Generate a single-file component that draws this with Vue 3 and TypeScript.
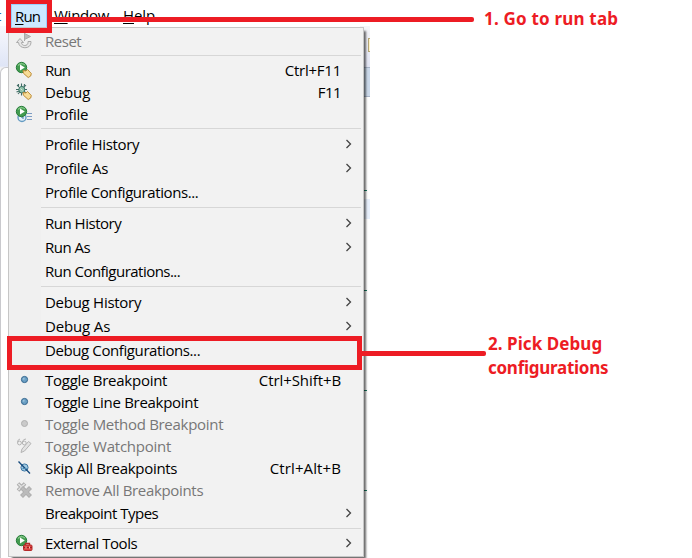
<script setup lang="ts">
import { onMounted, ref } from 'vue'

interface Item {
  label?: string
  width?: number
  icon?: string
  keys?: string
  keysWidth?: number
  sub?: boolean
  off?: boolean
  tall?: boolean
}

const sep: Item = {}
const items: Item[] = [
  { label: 'Reset', width: 36, icon: 'reset', off: true },
  sep,
  { label: 'Run', width: 25, icon: 'run', keys: 'Ctrl+F11', keysWidth: 56 },
  { label: 'Debug', width: 45, icon: 'debug', keys: 'F11', keysWidth: 23 },
  { label: 'Profile', width: 43, icon: 'profile' },
  sep,
  { label: 'Profile History', width: 94, sub: true, tall: true },
  { label: 'Profile As', width: 63, sub: true, tall: true },
  { label: 'Profile Configurations...', width: 153, tall: true },
  sep,
  { label: 'Run History', width: 76, sub: true, tall: true },
  { label: 'Run As', width: 45, sub: true, tall: true },
  { label: 'Run Configurations...', width: 135, tall: true },
  sep,
  { label: 'Debug History', width: 96, sub: true, tall: true },
  { label: 'Debug As', width: 65, sub: true, tall: true },
  { label: 'Debug Configurations...', width: 155, tall: true },
  sep,
  { label: 'Toggle Breakpoint', width: 122, icon: 'dot', keys: 'Ctrl+Shift+B', keysWidth: 82 },
  { label: 'Toggle Line Breakpoint', width: 153, icon: 'dot' },
  { label: 'Toggle Method Breakpoint', width: 178, icon: 'dotoff', off: true },
  { label: 'Toggle Watchpoint', width: 126, icon: 'watch', off: true },
  { label: 'Skip All Breakpoints', width: 132, icon: 'skip', keys: 'Ctrl+Alt+B', keysWidth: 71 },
  { label: 'Remove All Breakpoints', width: 158, icon: 'remove', off: true },
  { label: 'Breakpoint Types', width: 113, sub: true, tall: true },
  sep,
  { label: 'External Tools', width: 92, icon: 'external', sub: true, tall: true },
]

const root = ref<HTMLElement | null>(null)

function fit() {
  root.value?.querySelectorAll<HTMLElement>('[data-width]').forEach((el) => {
    el.style.letterSpacing = '0px'
    const n = el.textContent?.length ?? 1
    const spacing = (Number(el.dataset.width) + 0.2 - el.getBoundingClientRect().width) / n
    el.style.letterSpacing = `${spacing}px`
  })
}

onMounted(() => {
  fit()
  document.fonts.ready.then(fit)
})
</script>

<template>
  <div ref="root" class="screen">
    <div class="edge-left"><i class="tab"></i></div>
    <div class="edge-right">
      <i class="tool"></i><i class="band"></i><i class="row-hl"></i>
      <i class="tick t1"></i><i class="tick t2"></i><i class="tick t3"></i><i class="tick t4"></i>
    </div>

    <nav class="menubar">
      <span class="prev">t</span>
      <span class="open"><span data-width="25"><u>R</u>un</span></span>
      <span class="window"><span data-width="55"><u>W</u>indow</span></span>
      <span class="help"><span data-width="32"><u>H</u>elp</span></span>
    </nav>

    <div class="menu">
      <template v-for="(it, i) in items" :key="i">
        <div v-if="!it.label" class="sep"></div>
        <div v-else class="item" :class="{ off: it.off, tall: it.tall }">
          <span class="icon">
            <svg v-if="it.icon" width="18" height="18" viewBox="0 0 18 18">
              <g v-if="it.icon === 'reset'" fill="none" stroke="#aaa">
                <path d="M9.500 1v8" stroke="#aaa" />
                <path d="M9.500 1.500l6 3-6 3z" fill="#bbb" />
                <path d="M1.500 10.500l3.500-4 3.500 4H6.500c0 4 6.500 4 6.500 0v-1h3v1c0 7-12 7-12.500 0z" fill="#e6e6e6" />
              </g>
              <g v-else-if="it.icon === 'run' || it.icon === 'external' || it.icon === 'profile'">
                <g v-if="it.icon === 'profile'">
                  <circle cx="7" cy="12.500" r="4" fill="#e5f1fa" stroke="#659bc2" stroke-width="1.400" />
                  <path d="M7 10v3h2" fill="none" stroke="#477ca7" />
                  <path d="M12 8.500h5M12 11.500h5M12 14.500h5" stroke="#7c9cc4" />
                </g>
                <circle cx="6.500" cy="6.500" r="5.200" fill="#439b50" stroke="#277d3b" />
                <path d="M3 4.500Q6 1 10 4" fill="none" stroke="#87c889" stroke-width="1.200" />
                <path d="M5 3.500l4.800 3-4.800 3z" fill="#fff" />
                <path v-if="it.icon === 'run'" d="M8 9.500l3 .5 1.500-1.500 3.800 4-.6 2.500-2.500 1.500-4.800-4.300z" fill="#f8dc96" stroke="#bd8c38" />
                <g v-if="it.icon === 'external'">
                  <path d="M10.500 11V9.500h4V11" fill="none" stroke="#b52a2b" stroke-width="1.300" />
                  <rect x="8.500" y="11" width="8.500" height="5.500" rx="1" fill="#dc4541" stroke="#b52a2b" />
                  <path d="M8.500 13.500h8.500" stroke="#a11e22" />
                  <path d="M11 12.500v2M14.500 12.500v2" stroke="#f7bcab" />
                </g>
              </g>
              <g v-else-if="it.icon === 'debug'">
                <path d="M2 2l10 9M11 2L3 11M6.500.5v12M1 6.500h11M3.500 1v3M1.500 9l3-1M9.500 1L9 4" stroke="#426d66" stroke-width="1.100" fill="none" />
                <ellipse cx="6.800" cy="6.700" rx="3" ry="3.300" fill="#8fc1aa" stroke="#397366" />
                <path d="M5.500 5.500l2 2" stroke="#d0e9cf" />
                <path d="M8 9.500l3 .5 1.500-1.500 3.800 4-.6 2.500-2.500 1.500-4.800-4.300z" fill="#f8dc96" stroke="#bd8c38" />
              </g>
              <g v-else-if="it.icon === 'dot'">
                <circle cx="9.500" cy="8.500" r="3.100" fill="#6ba0c5" stroke="#33658d" />
                <circle cx="8.700" cy="7.700" r="1" fill="#9dc4dc" />
              </g>
              <circle v-else-if="it.icon === 'dotoff'" cx="9.500" cy="8.500" r="3" fill="#cacaca" stroke="#b0b0b0" />
              <g v-else-if="it.icon === 'watch'" fill="none" stroke="#b4b4b4">
                <circle cx="4.500" cy="6" r="1.900" /><circle cx="9.300" cy="6" r="1.900" />
                <path d="M2.500 5.500Q2.500 2.500 5 2M7 5.500Q8.500 1.500 11 2" />
                <path d="M6 15.500l1-3.500 6.500-7.500 2.500 2-6.500 7.500z" fill="#e3e3e3" />
              </g>
              <g v-else-if="it.icon === 'skip'">
                <circle cx="9.500" cy="8.500" r="3.600" fill="#9fcae3" stroke="#3d76a3" />
                <path d="M3.500 2.500l11.500 12" stroke="#174a7c" stroke-width="1.300" />
                <path d="M7.500 9.500h4" stroke="#4a89b5" />
              </g>
              <g v-else-if="it.icon === 'remove'">
                <path d="M3 2.500l7 7M10 2.500l-7 7" stroke="#a7a7a7" stroke-width="3.600" />
                <path d="M3.300 2.800l6.400 6.400M9.700 2.800L3.300 9.200" stroke="#dedede" stroke-width="1.800" />
                <path d="M6.500 6.500l9 9M15.500 6.500l-9 9" stroke="#aaa" stroke-width="4.200" />
                <path d="M7 7l8 8M15 7l-8 8" stroke="#bbb" stroke-width="2.600" />
              </g>
            </svg>
          </span>
          <span class="label"><span :data-width="it.width">{{ it.label }}</span></span>
          <span v-if="it.keys" class="keys"><span :data-width="it.keysWidth">{{ it.keys }}</span></span>
          <svg v-if="it.sub" class="chev" width="8" height="10" viewBox="0 0 8 10">
            <path d="M1.500 1l4 4-4 4" fill="none" stroke="#444" stroke-width="1.300" />
          </svg>
        </div>
      </template>
    </div>

    <div class="box box-run"></div>
    <div class="line line-run"></div>
    <div class="note note-run"><span data-width="134">1. Go to run tab</span></div>

    <div class="box box-debug"></div>
    <div class="line line-debug"></div>
    <div class="note note-debug">
      <div><span data-width="114">2. Pick Debug</span></div>
      <div><span data-width="120">configurations</span></div>
    </div>
  </div>
</template>

<style>
body { background: #fff; overflow: hidden; }
</style>

<style scoped>
.screen {
  position: relative;
  width: 692px;
  height: 558px;
  overflow: hidden;
  background: #fff;
  color: #000;
  font: 15px/22px 'Open Sans', 'Noto Sans', sans-serif;
  white-space: pre;
}
.edge-left {
  position: absolute;
  left: 0;
  top: 26px;
  width: 10px;
  height: 532px;
  background: linear-gradient(#f7f8fd, #dfe5f6 40px, #f4f4f4 42px, #f4f4f4);
}
.tab {
  position: absolute;
  left: 0;
  top: 41px;
  width: 12px;
  height: 500px;
  box-sizing: border-box;
  border: 1px solid #c9c9cd;
  border-right: 0;
  border-radius: 6px 0 0 0;
  background: #fff;
}
.edge-right {
  position: absolute;
  left: 360px;
  top: 26px;
  width: 10px;
  height: 532px;
  background: linear-gradient(#f5f5f8, #e2e5f4 42px, #fff 42px);
}
.edge-right i { position: absolute; }
.edge-right .tool { left: 8px; top: 12px; width: 2px; height: 14px; box-sizing: border-box; border: 1px solid #b5a678; border-right: 0; background: #fff3c6; }
.edge-right .band { left: 0; top: 41px; width: 10px; height: 30px; box-sizing: border-box; border: solid #a9b5c8; border-width: 1px 0; background: #cbd9ea; }
.edge-right .row-hl { left: 0; top: 173px; width: 10px; height: 20px; background: #e8f0fc; }
.edge-right .tick { left: 0; width: 7px; height: 1px; background: #168064; }
.edge-right .t1 { top: 164px; }
.edge-right .t2 { top: 264px; }
.edge-right .t3 { top: 364px; }
.edge-right .t4 { top: 464px; }

.menubar {
  display: flex;
  height: 26px;
  padding-top: 4px;
  box-sizing: border-box;
}
.menubar > span { height: 24px; }
.menubar u { text-decoration-thickness: 1px; text-underline-offset: 2px; }
.prev { margin-left: -4px; color: #236c9d; }
.menubar .prev { width: 15px; }
.menubar .open { width: 36px; padding-left: 3px; box-sizing: border-box; border: 1px solid #99d1ff; background: #cce8ff; line-height: 22px; }
.window { margin-left: 7px; width: 69px; }

.menu {
  position: absolute;
  left: 8px;
  top: 27px;
  width: 356px;
  height: 530px;
  box-sizing: border-box;
  padding: 3px 2px 0;
  border: 1px solid #c6c6c6;
  background: linear-gradient(90deg, #f0f0f0 32px, #f2f2f2 32px);
  box-shadow: 3px 3px 2px -1px rgba(0, 0, 0, 0.58);
}
.item {
  display: flex;
  align-items: center;
  height: 22px;
  padding-bottom: 2px;
  box-sizing: border-box;
}
.item.tall { height: 24px; }
.item.off { color: #777; }
.icon {
  width: 34px;
  height: 18px;
  padding-left: 4px;
  box-sizing: border-box;
  flex: none;
}
.icon svg { display: block; }
.label { flex: 1; }
.keys { margin-right: 20px; }
.chev { margin-right: 8px; }
.sep {
  height: 7px;
  margin-left: 30px;
  box-sizing: border-box;
  background: linear-gradient(#d7d7d7, #d7d7d7) 0 2px / 100% 1px no-repeat;
}
.sep:nth-last-child(2) { height: 6px; }

.box { position: absolute; box-sizing: border-box; border: 5px solid #ed1c24; }
.box-run { left: 6px; top: -1px; width: 46px; height: 34px; }
.box-debug { left: 7px; top: 336px; width: 355px; height: 34px; }
.line { position: absolute; height: 5px; border-radius: 0 2px 2px 0; background: #ed1c24; }
.line-run { left: 50px; top: 17px; width: 424px; }
.line-debug { left: 360px; top: 351px; width: 126px; }
.note { position: absolute; color: #ed1c24; font: 700 17px/24px 'Noto Sans', 'Open Sans', sans-serif; }
.note-run { left: 484px; top: 7px; }
.note-debug { left: 488px; top: 332px; }
</style>
